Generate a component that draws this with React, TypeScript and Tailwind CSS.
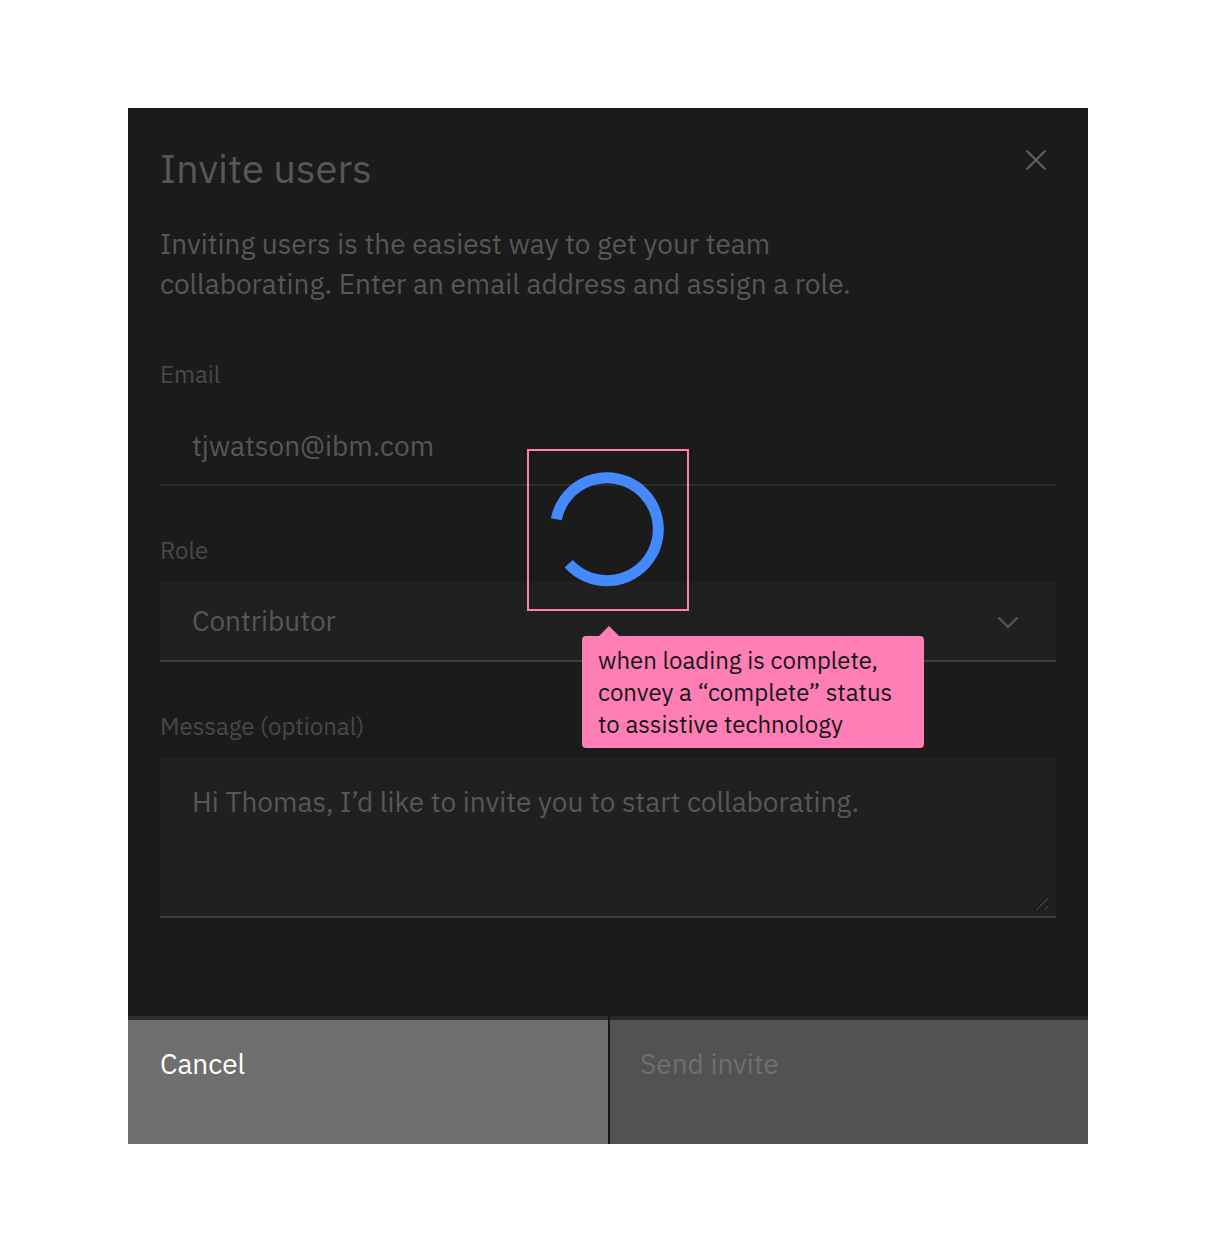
import type { ReactNode } from 'react'

function Field({ id, label, children }: { id: string; label: string; children: ReactNode }) {
  return (
    <div className="flex flex-col gap-4">
      <label htmlFor={id} className="text-[24px] leading-8 text-[#484848]">
        {label}
      </label>
      <div className="relative flex">{children}</div>
    </div>
  )
}

function CloseIcon() {
  return (
    <svg viewBox="0 0 32 32" className="size-8" fill="none" stroke="#5f5f5f" strokeWidth="2.2" aria-hidden="true">
      <path d="M6.5 6.5L25.5 25.5M25.5 6.5L6.5 25.5" />
    </svg>
  )
}

function ChevronIcon() {
  return (
    <svg viewBox="0 0 32 32" className="pointer-events-none absolute top-6 right-8 size-8" fill="none" stroke="#5a5a5a" strokeWidth="2" aria-hidden="true">
      <path d="M6.5 11.5L16 21L25.5 11.5" />
    </svg>
  )
}

function ResizeGrip() {
  return (
    <svg viewBox="0 0 16 16" className="pointer-events-none absolute right-2 bottom-2 size-4" shapeRendering="crispEdges" aria-hidden="true">
      <path d="M2 14h2v2H2zM4 12h2v2H4zM6 10h2v2H6zM8 8h2v2H8zM10 6h2v2h-2zM12 4h2v2h-2zM14 2h2v2h-2zM10 14h2v2h-2zM12 12h2v2h-2zM14 10h2v2h-2z" fill="#151515" />
      <path d="M4 14h2v2H4zM6 12h2v2H6zM8 10h2v2H8zM10 8h2v2h-2zM12 6h2v2h-2zM14 4h2v2h-2zM12 14h2v2h-2zM14 12h2v2h-2z" fill="#3c3c3c" />
    </svg>
  )
}

export default function App() {
  return (
    <main className="min-h-screen bg-white px-32 py-[108px] font-['IBM_Plex_Sans','Noto_Sans',sans-serif] font-normal">
      <section role="dialog" aria-labelledby="title" className="relative bg-[#1b1b1b] text-[#575757]">
        <div className="flex flex-col px-8 pt-9 pb-[98px]">
          <header className="flex items-start justify-between">
            <h1 id="title" className="text-[40px] leading-12">Invite users</h1>
            <button type="button" aria-label="Close" className="mr-1">
              <CloseIcon />
            </button>
          </header>
          <p className="mt-8 max-w-[740px] text-[28px] leading-10">
            Inviting users is the easiest way to get your team collaborating. Enter an email address and assign a role.
          </p>
          <form className="mt-[54px] flex flex-col gap-12">
            <Field id="email" label="Email">
              <input id="email" type="email" defaultValue="tjwatson@ibm.com" className="h-20 w-full border-b-2 border-[#2e2e2e] bg-transparent px-8 text-[28px] outline-none" />
            </Field>
            <Field id="role" label="Role">
              <select id="role" className="h-20 w-full appearance-none border-b-2 border-[#3c3c3c] bg-[#202020] px-8 text-[28px] outline-none">
                <option>Contributor</option>
              </select>
              <ChevronIcon />
            </Field>
            <Field id="message" label="Message (optional)">
              <textarea id="message" defaultValue="Hi Thomas, I’d like to invite you to start collaborating." className="h-40 w-full resize-none border-b-2 border-[#3c3c3c] bg-[#202020] px-8 py-6 text-[28px] leading-10 outline-none" />
              <ResizeGrip />
            </Field>
          </form>
        </div>
        <footer className="grid grid-cols-2 text-[28px] leading-10">
          <button type="button" className="h-32 border-t-4 border-[#2f2f2f] bg-[#6f6f6f] px-8 pb-9 text-left text-white">
            Cancel
          </button>
          <button type="button" disabled className="h-32 border-l-2 border-[#171717] bg-[#525252] text-left text-[#6f6f6f]">
            <span className="flex h-full items-center border-t-4 border-[#272727] px-[30px] pb-9">Send invite</span>
          </button>
        </footer>
        <div role="status" aria-label="Loading" className="absolute top-[341px] left-1/2 size-[162px] -translate-x-1/2 border-2 border-[#ff7eb6]">
          <svg viewBox="0 0 158 158" className="size-full" fill="none" aria-hidden="true">
            <path d="M27.3 68.2A51.5 51.5 0 1 1 39.7 112.8" stroke="#4589ff" strokeWidth="11" />
          </svg>
        </div>
        <div role="tooltip" className="absolute top-[528px] left-1/2 -ml-[26px] w-[342px] rounded bg-[#ff7eb6] px-4 py-2 text-[24px] leading-8 whitespace-nowrap text-[#161616]">
          <svg viewBox="0 0 22 11" className="absolute -top-[10px] left-4 h-[11px] w-[22px]" aria-hidden="true">
            <path d="M0 11L11 0L22 11Z" fill="#ff7eb6" />
          </svg>
          <p>when loading is complete,</p>
          <p>convey a “complete” status</p>
          <p>to assistive technology</p>
        </div>
      </section>
    </main>
  )
}
